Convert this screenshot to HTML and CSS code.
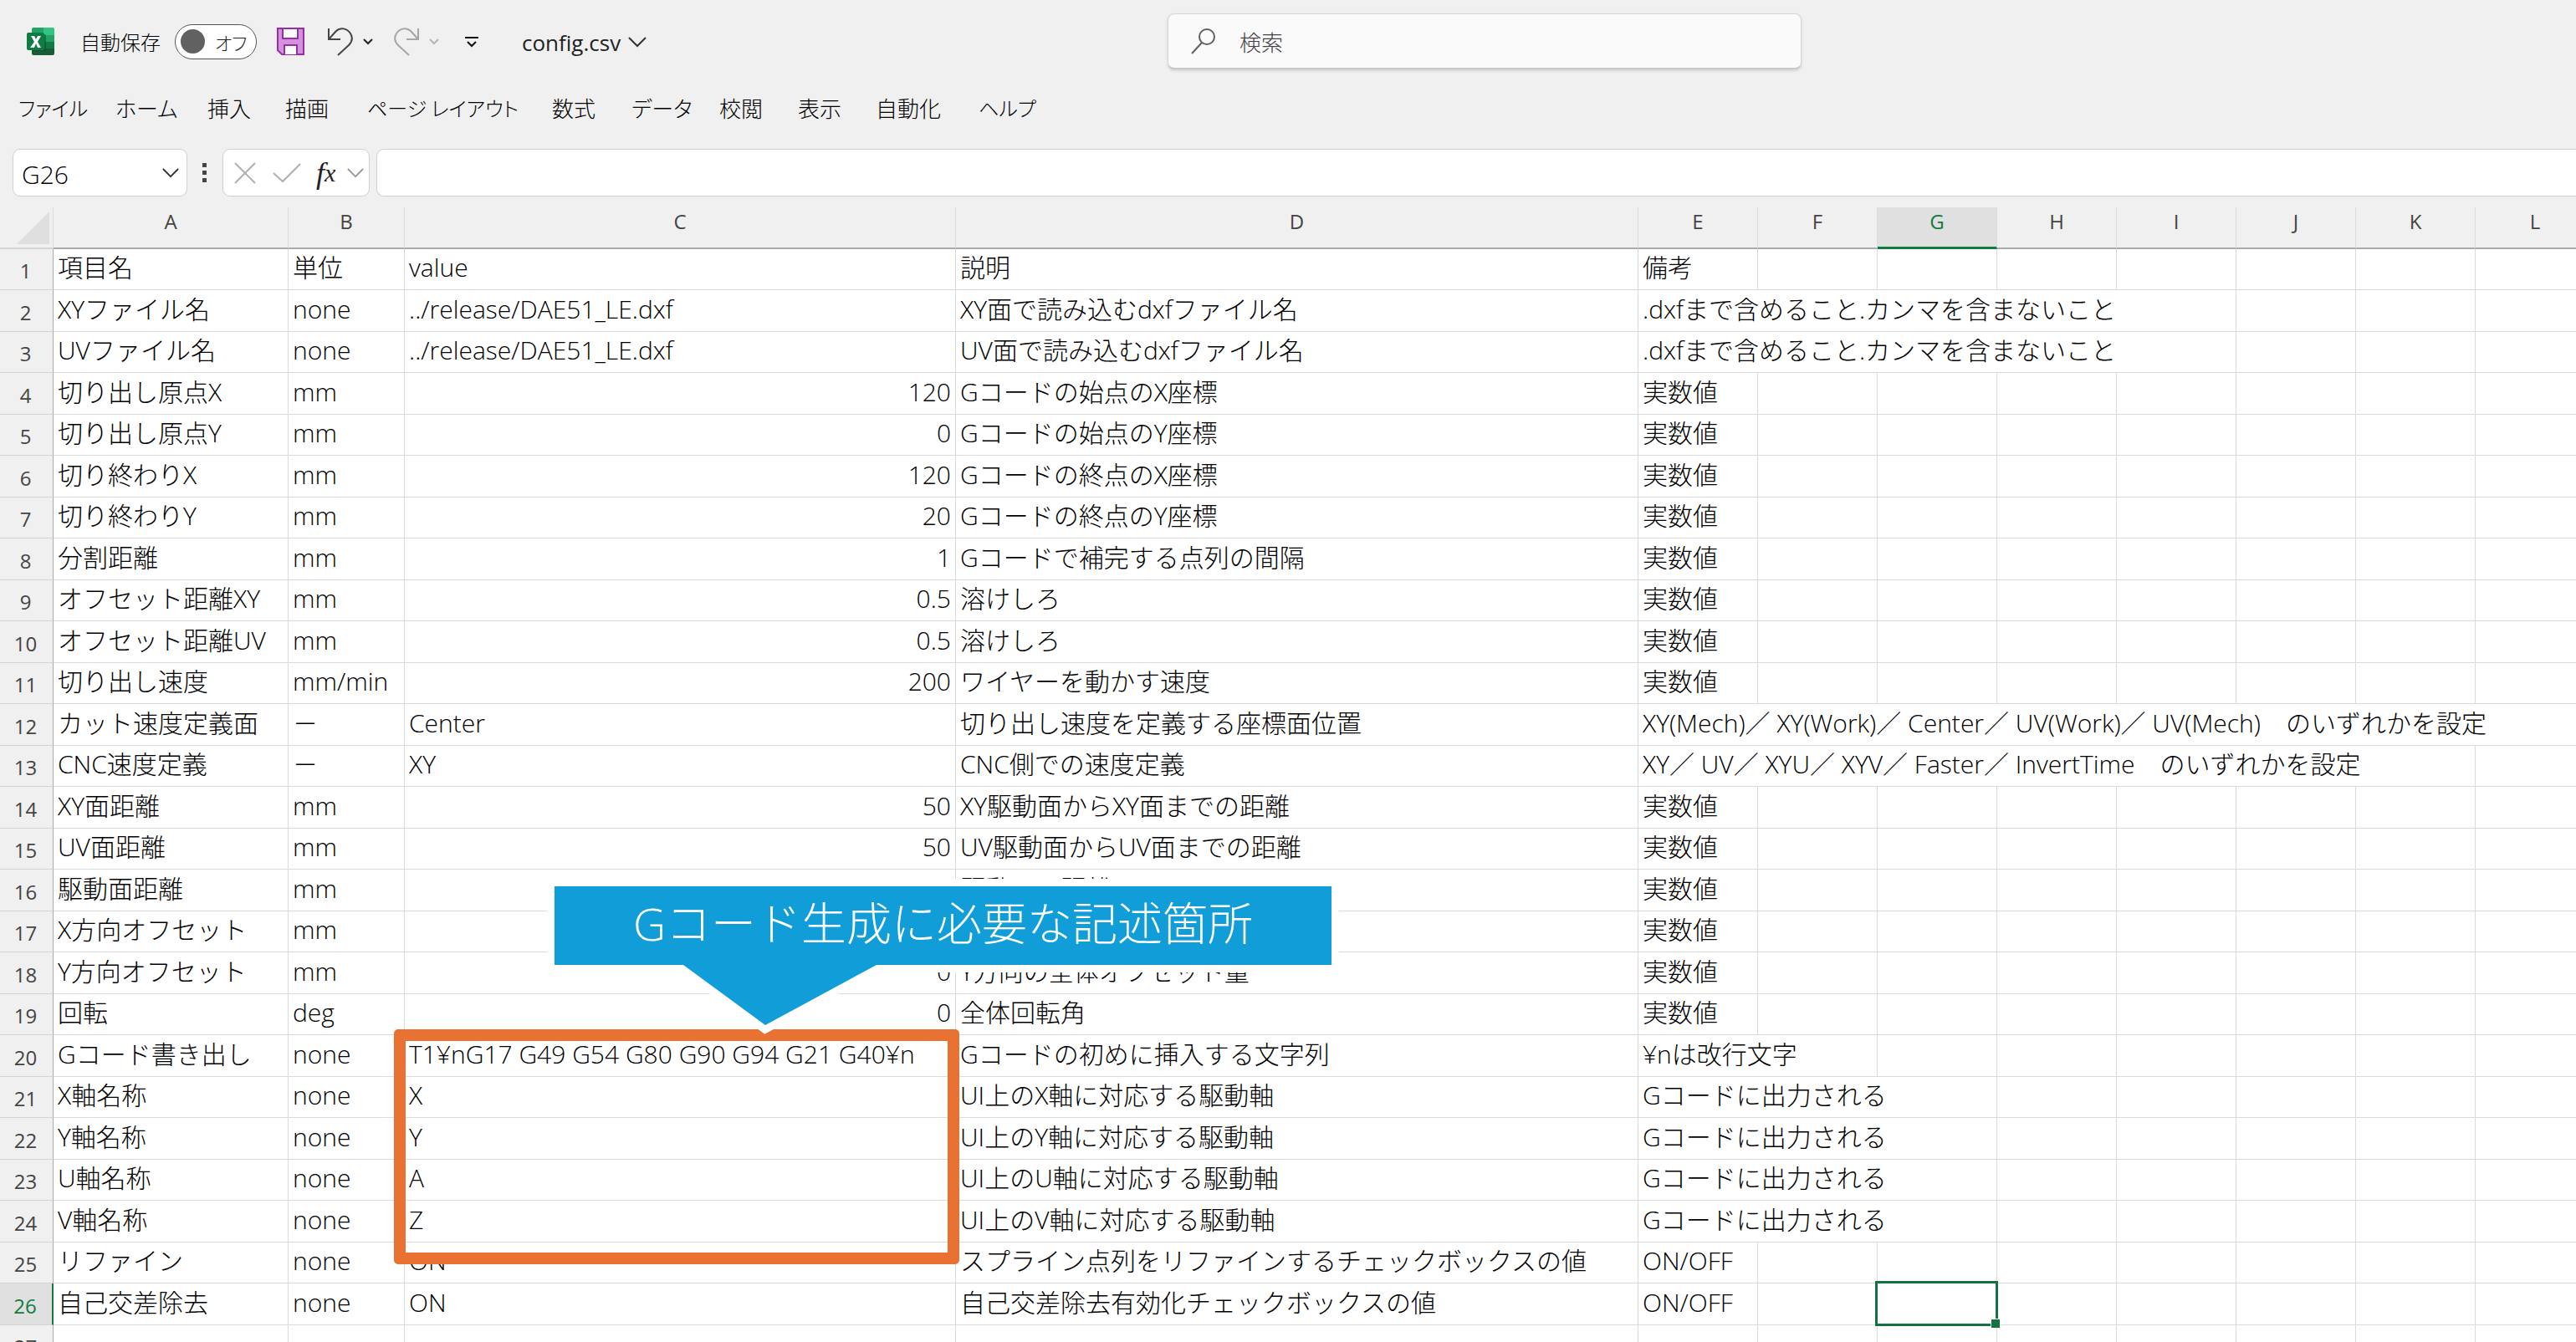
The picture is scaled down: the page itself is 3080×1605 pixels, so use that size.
FILE: index.html
```html
<!DOCTYPE html>
<html lang="ja">
<head>
<meta charset="utf-8">
<title>config.csv - Excel</title>
<link rel="stylesheet" href="styles.css">
</head>
<body>
<header class="titlebar">
  <div class="quick">
    <svg class="logo" viewBox="0 0 33 33" width="33" height="33" aria-label="Excel">
      <path d="M8 0h12v9H6V2a2 2 0 0 1 2-2z" fill="#21a366"/>
      <path d="M20 0h11a2 2 0 0 1 2 2v7H20z" fill="#33c481"/>
      <path d="M6 9h14v8H6z" fill="#107c41"/>
      <path d="M20 9h13v8H20z" fill="#21a366"/>
      <path d="M20 17h13v8H20z" fill="#107c41"/>
      <path d="M6 17h14v8h13v6a2 2 0 0 1-2 2H8a2 2 0 0 1-2-2z" fill="#185c37"/>
      <path d="M6 8h15a2 2 0 0 1 2 2v18H6z" fill="#0b4a2a" opacity=".55"/>
      <rect x="0" y="6" width="21" height="21" rx="2" fill="#107c41"/>
      <path d="M5 10h4l2 4 2-4h4l-4 7 4 7h-4l-2-5-2 5H4l5-7z" fill="#fff"/>
    </svg>
    <span class="autosave" id="autosave-label">自動保存</span>
    <button class="toggle" aria-labelledby="autosave-label"><span class="knob"></span>オフ</button>
    <button class="icon save" aria-label="保存">
      <svg viewBox="0 0 33 33" width="33" height="33" fill="none" stroke="#9330a5" stroke-width="2">
        <path d="M1 1h31v31H6l-5-5z" fill="#d590dc"/>
        <path d="M7 1h18v12H7z" fill="#fafafa"/>
        <path d="M9 32V21h15v11" fill="#fafafa"/>
      </svg>
    </button>
    <button class="icon undo" aria-label="元に戻す">
      <svg viewBox="0 0 32 34" width="32" height="34" fill="none" stroke="#444" stroke-width="2">
        <path d="M2 1v13h14M2 14L11 4C16 -1 24 1 28 7c3 5 2 10-2 14L13 33"/>
      </svg>
    </button>
    <svg class="small-chev" viewBox="0 0 12 8" width="12" height="8" fill="none" stroke="#222" stroke-width="2"><path d="M1 1l5 5 5-5"/></svg>
    <button class="icon redo" aria-label="やり直し">
      <svg viewBox="0 0 32 34" width="32" height="34" fill="none" stroke="#a6a6a6" stroke-width="2">
        <path d="M30 1v13H16M30 14L21 4C16 -1 8 1 4 7c-3 5-2 10 2 14l13 12"/>
      </svg>
    </button>
    <svg class="small-chev" viewBox="0 0 12 8" width="12" height="8" fill="none" stroke="#b5b5b5" stroke-width="2"><path d="M1 1l5 5 5-5"/></svg>
    <button class="icon customize" aria-label="クイック アクセス ツール バーのユーザー設定">
      <svg viewBox="0 0 16 14" width="16" height="14" fill="none" stroke="#111" stroke-width="2"><path d="M0 2h16M3 7l5 5 5-5"/></svg>
    </button>
    <button class="filename">config.csv
      <svg viewBox="0 0 22 13" width="22" height="13" fill="none" stroke="#333" stroke-width="2"><path d="M1 1l10 10L21 1"/></svg>
    </button>
  </div>
  <label class="search">
    <svg viewBox="0 0 30 32" width="30" height="32" fill="none" stroke="#616161" stroke-width="2"><circle cx="19" cy="11" r="9"/><path d="M13 18L1 31"/></svg>
    <input type="search" placeholder="検索" aria-label="検索">
  </label>
</header>
<nav class="tabs">
  <a class="compact" href="#">ファイル</a><a href="#">ホーム</a><a href="#">挿入</a><a href="#">描画</a><a class="compact" href="#">ページ レイアウト</a><a href="#">数式</a><a href="#">データ</a><a href="#">校閲</a><a href="#">表示</a><a href="#">自動化</a><a class="compact" href="#">ヘルプ</a>
</nav>
<div class="formula-bar">
  <div class="namebox">
    <input type="text" value="G26" aria-label="名前ボックス">
    <button class="icon" aria-label="名前の一覧"><svg viewBox="0 0 22 13" width="20" height="12" fill="none" stroke="#333" stroke-width="2"><path d="M1 1l10 10L21 1"/></svg></button>
  </div>
  <svg class="dots" viewBox="0 0 5 23" width="5" height="23" fill="#444"><path d="M0 0h5v5H0zM0 9h5v5H0zM0 18h5v5H0z"/></svg>
  <div class="fx-box">
    <button class="icon" aria-label="キャンセル"><svg viewBox="0 0 26 26" width="26" height="26" fill="none" stroke="#b0b0b0" stroke-width="2"><path d="M1 1l24 24M25 1L1 25"/></svg></button>
    <button class="icon" aria-label="入力"><svg viewBox="0 0 34 24" width="34" height="24" fill="none" stroke="#b0b0b0" stroke-width="2"><path d="M1 12l11 10L33 1"/></svg></button>
    <button class="icon fx" aria-label="関数の挿入"><i>f</i><i class="x">x</i></button>
    <svg viewBox="0 0 22 13" width="20" height="12" fill="none" stroke="#999" stroke-width="2"><path d="M1 1l10 10L21 1"/></svg>
  </div>
  <input class="formula" type="text" aria-label="数式バー">
</div>
<main class="sheet">
<table class="grid">
<colgroup><col class="c-head"><col class="c-a"><col class="c-b"><col class="c-c"><col class="c-d"><col class="c-n" span="8"></colgroup>
<thead><tr><th class="corner"><svg viewBox="0 0 39 39" width="39" height="39"><path d="M39 0v39H0z" fill="#dedede"/></svg></th><th>A</th><th>B</th><th>C</th><th>D</th><th>E</th><th>F</th><th class="active">G</th><th>H</th><th>I</th><th>J</th><th>K</th><th>L</th></tr></thead>
<tbody>
<tr><th>1</th><td>項目名</td><td>単位</td><td>value</td><td>説明</td><td>備考</td><td></td><td></td><td></td><td></td><td></td><td></td><td></td></tr>
<tr><th>2</th><td>XYファイル名</td><td>none</td><td>../release/DAE51_LE.dxf</td><td>XY面で読み込むdxfファイル名</td><td colspan="5">.dxfまで含めること.カンマを含まないこと</td><td></td><td></td><td></td></tr>
<tr><th>3</th><td>UVファイル名</td><td>none</td><td>../release/DAE51_LE.dxf</td><td>UV面で読み込むdxfファイル名</td><td colspan="5">.dxfまで含めること.カンマを含まないこと</td><td></td><td></td><td></td></tr>
<tr><th>4</th><td>切り出し原点X</td><td>mm</td><td class="num">120</td><td>Gコードの始点のX座標</td><td>実数値</td><td></td><td></td><td></td><td></td><td></td><td></td><td></td></tr>
<tr><th>5</th><td>切り出し原点Y</td><td>mm</td><td class="num">0</td><td>Gコードの始点のY座標</td><td>実数値</td><td></td><td></td><td></td><td></td><td></td><td></td><td></td></tr>
<tr><th>6</th><td>切り終わりX</td><td>mm</td><td class="num">120</td><td>Gコードの終点のX座標</td><td>実数値</td><td></td><td></td><td></td><td></td><td></td><td></td><td></td></tr>
<tr><th>7</th><td>切り終わりY</td><td>mm</td><td class="num">20</td><td>Gコードの終点のY座標</td><td>実数値</td><td></td><td></td><td></td><td></td><td></td><td></td><td></td></tr>
<tr><th>8</th><td>分割距離</td><td>mm</td><td class="num">1</td><td>Gコードで補完する点列の間隔</td><td>実数値</td><td></td><td></td><td></td><td></td><td></td><td></td><td></td></tr>
<tr><th>9</th><td>オフセット距離XY</td><td>mm</td><td class="num">0.5</td><td>溶けしろ</td><td>実数値</td><td></td><td></td><td></td><td></td><td></td><td></td><td></td></tr>
<tr><th>10</th><td>オフセット距離UV</td><td>mm</td><td class="num">0.5</td><td>溶けしろ</td><td>実数値</td><td></td><td></td><td></td><td></td><td></td><td></td><td></td></tr>
<tr><th>11</th><td>切り出し速度</td><td>mm/min</td><td class="num">200</td><td>ワイヤーを動かす速度</td><td>実数値</td><td></td><td></td><td></td><td></td><td></td><td></td><td></td></tr>
<tr><th>12</th><td>カット速度定義面</td><td>－</td><td>Center</td><td>切り出し速度を定義する座標面位置</td><td colspan="8">XY(Mech)／ XY(Work)／ Center／ UV(Work)／ UV(Mech)　のいずれかを設定</td></tr>
<tr><th>13</th><td>CNC速度定義</td><td>－</td><td>XY</td><td>CNC側での速度定義</td><td colspan="7">XY／ UV／ XYU／ XYV／ Faster／ InvertTime　のいずれかを設定</td><td></td></tr>
<tr><th>14</th><td>XY面距離</td><td>mm</td><td class="num">50</td><td>XY駆動面からXY面までの距離</td><td>実数値</td><td></td><td></td><td></td><td></td><td></td><td></td><td></td></tr>
<tr><th>15</th><td>UV面距離</td><td>mm</td><td class="num">50</td><td>UV駆動面からUV面までの距離</td><td>実数値</td><td></td><td></td><td></td><td></td><td></td><td></td><td></td></tr>
<tr><th>16</th><td>駆動面距離</td><td>mm</td><td></td><td>駆動面の距離</td><td>実数値</td><td></td><td></td><td></td><td></td><td></td><td></td><td></td></tr>
<tr><th>17</th><td>X方向オフセット</td><td>mm</td><td></td><td></td><td>実数値</td><td></td><td></td><td></td><td></td><td></td><td></td><td></td></tr>
<tr><th>18</th><td>Y方向オフセット</td><td>mm</td><td class="num">0</td><td>Y方向の全体オフセット量</td><td>実数値</td><td></td><td></td><td></td><td></td><td></td><td></td><td></td></tr>
<tr><th>19</th><td>回転</td><td>deg</td><td class="num">0</td><td>全体回転角</td><td>実数値</td><td></td><td></td><td></td><td></td><td></td><td></td><td></td></tr>
<tr><th>20</th><td>Gコード書き出し</td><td>none</td><td>T1¥nG17 G49 G54 G80 G90 G94 G21 G40¥n</td><td>Gコードの初めに挿入する文字列</td><td colspan="2">¥nは改行文字</td><td></td><td></td><td></td><td></td><td></td><td></td></tr>
<tr><th>21</th><td>X軸名称</td><td>none</td><td>X</td><td>UI上のX軸に対応する駆動軸</td><td colspan="3">Gコードに出力される</td><td></td><td></td><td></td><td></td><td></td></tr>
<tr><th>22</th><td>Y軸名称</td><td>none</td><td>Y</td><td>UI上のY軸に対応する駆動軸</td><td colspan="3">Gコードに出力される</td><td></td><td></td><td></td><td></td><td></td></tr>
<tr><th>23</th><td>U軸名称</td><td>none</td><td>A</td><td>UI上のU軸に対応する駆動軸</td><td colspan="3">Gコードに出力される</td><td></td><td></td><td></td><td></td><td></td></tr>
<tr><th>24</th><td>V軸名称</td><td>none</td><td>Z</td><td>UI上のV軸に対応する駆動軸</td><td colspan="3">Gコードに出力される</td><td></td><td></td><td></td><td></td><td></td></tr>
<tr><th>25</th><td>リファイン</td><td>none</td><td>ON</td><td>スプライン点列をリファインするチェックボックスの値</td><td>ON/OFF</td><td></td><td></td><td></td><td></td><td></td><td></td><td></td></tr>
<tr><th class="active">26</th><td>自己交差除去</td><td>none</td><td>ON</td><td>自己交差除去有効化チェックボックスの値</td><td>ON/OFF</td><td></td><td class="selected"></td><td></td><td></td><td></td><td></td><td></td></tr>
<tr><th>27</th><td></td><td></td><td></td><td></td><td></td><td></td><td></td><td></td><td></td><td></td><td></td><td></td></tr>
</tbody>
</table>
<div class="highlight"></div>
<div class="callout">
  <svg viewBox="0 0 949 196" width="949" height="196"><path d="M10 10H939V104H395L262 176L164 104H10Z" fill="none" stroke="#fff" stroke-width="18"/><path d="M10 10H939V104H395L262 176L164 104H10Z" fill="#109dd8"/></svg>
  <p>Gコード生成に必要な記述箇所</p>
</div>
</main>
</body>
</html>
```
FILE: styles.css
```css
* { box-sizing: border-box; }

body {
  margin: 0;
  height: 100vh;
  overflow: hidden;
  display: flex;
  flex-direction: column;
  background: #f0f0f0;
  color: #222;
  font-family: "Open Sans", "Noto Sans CJK JP", sans-serif;
  font-size: 26px;
}

button, input { font: inherit; color: inherit; border: 0; background: none; padding: 0; margin: 0; }
input { min-width: 0; outline: 0; }
svg { display: block; flex: none; }
.icon { display: flex; align-items: center; }

/* Title bar */
.titlebar {
  display: grid;
  grid-template-columns: 1396fr 758fr 926fr;
  height: 99px;
  align-items: start;
}
.quick { display: flex; align-items: center; height: 99px; padding-left: 32px; }
.autosave { margin-left: 31px; font-size: 24px; font-family: "Noto Sans CJK JP", sans-serif; font-weight: 300; color: #000; }
.toggle {
  display: flex;
  align-items: center;
  gap: 12px;
  width: 98px;
  height: 42px;
  margin-left: 17px;
  padding-left: 6px;
  border: 1px solid #555;
  border-radius: 21px;
  background: #fff;
  font-family: "Noto Sans CJK JP", sans-serif;
  font-size: 22px;
  font-weight: 300;
  font-feature-settings: "palt";
  white-space: nowrap;
}
.knob { flex: none; width: 29px; height: 29px; border-radius: 50%; background: #616161; }
.save { margin-left: 24px; }
.undo { margin-left: 27px; }
.redo { margin-left: 24px; }
.small-chev { margin-left: 11px; }
.customize { margin-left: 31px; }
.filename { display: flex; align-items: center; gap: 9px; margin-left: 52px; padding-top: 2px; font-size: 26px; }
.search {
  display: flex;
  align-items: center;
  gap: 28px;
  height: 67px;
  margin-top: 16px;
  padding-left: 27px;
  border: 1px solid #d6d6d6;
  border-bottom: 2px solid #c8c8c8;
  border-radius: 8px;
  background: #fafafa;
  box-shadow: 0 2px 3px #d4d4d4;
}
.search input { flex: 1; font-family: "Noto Sans CJK JP", sans-serif; font-weight: 300; }
.search input::placeholder { color: #444; opacity: 1; }

/* Ribbon tabs */
.tabs {
  display: grid;
  grid-template-columns: 116px 110px 93px 98px 221px 95px 105px 94px 93px 123px auto;
  height: 63px;
  padding: 0 0 4px 22px;
  align-items: center;
  font-family: "Noto Sans CJK JP", sans-serif;
  font-weight: 300;
  font-feature-settings: "palt";
}
.tabs a { color: #000; text-decoration: none; white-space: nowrap; }
.tabs .compact { font-size: 24px; }

/* Formula bar */
.formula-bar { display: flex; align-items: center; height: 57px; margin: 16px 0 13px; padding-left: 15px; }
.namebox, .fx-box, .formula {
  display: flex;
  align-items: center;
  height: 57px;
  border: 1px solid #d0d0d0;
  border-radius: 9px;
  background: #fff;
}
.namebox { width: 209px; padding: 0 9px 0 10px; }
.namebox input { flex: 1; padding-top: 4px; font-size: 30px; font-weight: 300; color: #000; }
.dots { margin: 0 19px 0 18px; }
.fx-box { width: 176px; gap: 20px; padding-left: 13px; }
.fx { font-family: "Liberation Serif", serif; font-size: 36px; line-height: 40px; color: #222; margin: 0 -6px 0 -2px; }
.fx .x { font-size: 30px; }
.formula { flex: 1; margin-left: 8px; border-right: 0; border-radius: 9px 0 0 9px; padding: 0 10px; }

/* Worksheet */
.sheet { position: relative; flex: 1; min-height: 0; overflow: hidden; }
.grid {
  table-layout: fixed;
  width: 3103px;
  border-collapse: separate;
  border-spacing: 0;
  background: #fff;
}
.c-head { width: 64px; }
.c-a { width: 281px; }
.c-b { width: 139px; }
.c-c { width: 659px; }
.c-d { width: 816px; }
.c-n { width: 143px; }

.grid th {
  padding: 0;
  background: #f0f0f0;
  color: #444;
  font-size: 24px;
  font-weight: 400;
  line-height: 32px;
}
.grid thead th {
  height: 50px;
  padding-bottom: 14px;
  border-bottom: 2px solid #aaa;
  border-right: 1px solid #dcdcdc;
}
.grid thead .corner { padding: 0 0 4px 20px; vertical-align: bottom; border-bottom-color: #d4d4d4; }
.grid thead .active { background: #e0e0e0; color: #107c41; border-bottom: 3px solid #107c41; }
.grid tbody th {
  padding: 4px 2px 0 0;
  border-right: 1px solid #aaa;
  border-bottom: 1px solid #d4d4d4;
}
.grid tbody .active { background: #e0e0e0; color: #107c41; border-right: 2px solid #107c41; }
.grid td {
  height: 49px;
  padding: 0 5px 4px;
  border-right: 1px solid #dadada;
  border-bottom: 1px solid #dadada;
  color: #000;
  font-size: 30px;
  font-weight: 300;
  line-height: 44px;
  white-space: nowrap;
}
.grid tbody tr:nth-child(even) td { height: 50px; }
.grid .num { text-align: right; }
.grid .selected { position: relative; }
.selected::before {
  content: "";
  position: absolute;
  inset: -3px -2px -2px -3px;
  border: 3px solid #137340;
}
.selected::after {
  content: "";
  position: absolute;
  right: -4px;
  bottom: -4px;
  width: 10px;
  height: 10px;
  border: solid #fff;
  border-width: 1px 0 0 1px;
  background: #137340;
}

/* Annotations drawn over the cells */
.highlight {
  position: absolute;
  left: 471px;
  top: 983px;
  width: 676px;
  height: 281px;
  border: 14px solid #e97132;
  border-radius: 5px;
}
.callout { position: absolute; left: 653px; top: 802px; }
.callout p {
  position: absolute;
  inset: 10px 10px auto;
  margin: 0;
  color: #fff;
  font-size: 54px;
  font-weight: 300;
  line-height: 88px;
  text-align: center;
  white-space: nowrap;
}
```
